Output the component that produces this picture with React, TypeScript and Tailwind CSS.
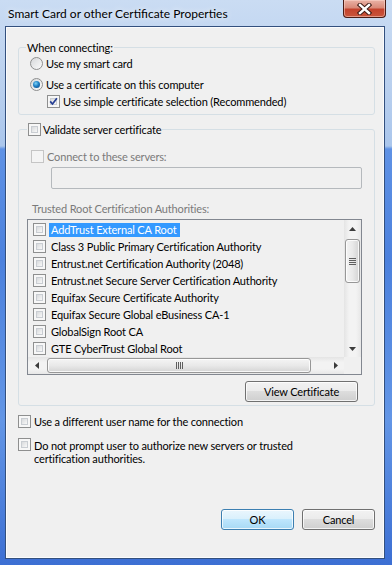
import React from 'react';

const Check: React.FC<{ checked?: boolean; disabled?: boolean }> = ({ checked = false, disabled = false }) => (
  <span
    className={`relative inline-block w-[13px] h-[13px] shrink-0 border ${
      disabled ? 'border-[#c5c5c5] bg-[#f4f4f4]' : 'border-[#8e8f8f] bg-[#f7f7f7]'
    }`}
  >
    {!disabled && (
      <span className="absolute inset-[2px] border border-[#c9cdd2] bg-[linear-gradient(135deg,#d8dadc,#f8f8f8)]" />
    )}
    {checked && (
      <svg className="absolute inset-0" width="11" height="11" viewBox="0 0 11 11">
        <path d="M2.2 5.4 L4.5 8 L8.9 2.3" fill="none" stroke="#243d94" strokeWidth="1.7" />
      </svg>
    )}
  </span>
);

const Radio: React.FC<{ checked?: boolean }> = ({ checked = false }) => (
  <span className="relative inline-block w-[13px] h-[13px] shrink-0 rounded-full border border-[#8e8f8f] bg-[linear-gradient(135deg,#d6d8da,#fbfbfb)]">
    {checked && (
      <span className="absolute left-[2px] top-[2px] w-[7px] h-[7px] rounded-full bg-[radial-gradient(circle_at_40%_35%,#7fd3f7_0%,#1f80c4_45%,#0b3f7d_100%)]" />
    )}
  </span>
);

const Button: React.FC<{ children: React.ReactNode; primary?: boolean; className?: string }> = ({ children, primary, className }) => (
  <div
    className={`h-[21px] flex items-center justify-center rounded-[3px] border shadow-[inset_0_0_0_1px_rgba(255,255,255,0.75)] ${
      primary
        ? 'border-[#3c7fb1] bg-[linear-gradient(180deg,#eaf6fd_0%,#d9f0fc_48%,#bee6fd_50%,#a7d9f5_100%)]'
        : 'border-[#707070] bg-[linear-gradient(180deg,#f2f2f2_0%,#ebebeb_48%,#dddddd_50%,#cfcfcf_100%)]'
    } ${className ?? ''}`}
  >
    {children}
  </div>
);

const Arrow: React.FC<{ dir: 'up' | 'down' | 'left' | 'right' }> = ({ dir }) => {
  const pts = {
    up: '0,4 3.5,0 7,4',
    down: '0,0 3.5,4 7,0',
    left: '4,0 0,3.5 4,7',
    right: '0,0 4,3.5 0,7',
  }[dir];
  const vertical = dir === 'up' || dir === 'down';
  return (
    <svg width={vertical ? 7 : 4} height={vertical ? 4 : 7} viewBox={vertical ? '0 0 7 4' : '0 0 4 7'}>
      <polygon points={pts} fill="#3c3c3c" />
    </svg>
  );
};

const certs = [
  'AddTrust External CA Root',
  'Class 3 Public Primary Certification Authority',
  'Entrust.net Certification Authority (2048)',
  'Entrust.net Secure Server Certification Authority',
  'Equifax Secure Certificate Authority',
  'Equifax Secure Global eBusiness CA-1',
  'GlobalSign Root CA',
  'GTE CyberTrust Global Root',
];

const App: React.FC = () => {
  return (
    <div className="w-[392px] h-[565px] flex flex-col overflow-hidden text-[11px] leading-[15px] tracking-[-0.15px] text-black [font-family:Lato,'Liberation_Sans',sans-serif] bg-[linear-gradient(180deg,#cadcf3_0px,#b8cfee_90px,#aac6ec_146px,#5f92e5_149px,#4c81dd_260px,#6396e6_420px,#3c6fd3_565px)]">
      {/* Title bar */}
      <div className="h-[26px] shrink-0 flex items-start justify-between">
        <span className="pl-[8px] pt-[6px] text-[12px] tracking-normal [text-shadow:0_0_6px_#ffffff]">Smart Card or other Certificate Properties</span>
        <div className="mr-[6px] w-[43px] h-[18px] rounded-b-[4px] border border-t-0 border-[#4a1c15] bg-[linear-gradient(180deg,#eab3a6_0%,#d98a79_45%,#c4432d_55%,#c9553c_100%)] shadow-[inset_0_0_0_1px_rgba(255,220,210,0.5)] flex items-center justify-center">
          <svg width="15" height="12" viewBox="0 0 15 12">
            <path d="M3 2 L12 10 M12 2 L3 10" stroke="#3d1a14" strokeWidth="4.4" strokeLinecap="square" />
            <path d="M3 2 L12 10 M12 2 L3 10" stroke="#ffffff" strokeWidth="2.4" strokeLinecap="square" />
          </svg>
        </div>
      </div>

      {/* Client area */}
      <div className="flex-1 flex pl-[5px] pr-[7px] pb-[6px]">
        <div className="flex-1 flex flex-col border border-[#33507e] bg-[#f0f0f0] shadow-[inset_0_0_0_1px_#fbfcfd]">
          {/* When connecting */}
          <fieldset className="mt-[13px] ml-[12px] w-[357px] border border-[#d5dfe5] rounded-[3px] pb-[5px]">
            <legend className="ml-[7px] px-[1px] leading-[15px]">When connecting:</legend>
            <div className="mt-[1px] h-[15px] pl-[11px] flex items-center gap-[3px]">
              <Radio />
              <span>Use my smart card</span>
            </div>
            <div className="mt-[6px] h-[15px] pl-[11px] flex items-center gap-[3px]">
              <Radio checked />
              <span>Use a certificate on this computer</span>
            </div>
            <div className="mt-[2px] h-[15px] pl-[28px] flex items-center gap-[3px]">
              <Check checked />
              <span>Use simple certificate selection (Recommended)</span>
            </div>
          </fieldset>

          {/* Validate server certificate */}
          <fieldset className="mt-[7px] ml-[12px] w-[357px] border border-[#d5dfe5] rounded-[3px] pb-[3px]">
            <legend className="ml-[8px] px-[1px] leading-[15px]">
              <span className="flex items-center gap-[2px]">
                <Check />
                <span>Validate server certificate</span>
              </span>
            </legend>
            <div className="mt-[12px] h-[15px] pl-[12px] flex items-center gap-[3px] text-[#7a7a7a]">
              <Check disabled />
              <span>Connect to these servers:</span>
            </div>
            <div className="mt-[3px] ml-[32px] w-[311px] h-[22px] border border-[#b5b9bd] rounded-[2px] bg-[#f0f0f0]" />
            <div className="mt-[12px] h-[15px] pl-[13px] text-[#7a7a7a]">Trusted Root Certification Authorities:</div>

            {/* List box */}
            <div className="mt-[3px] ml-[8px] w-[335px] h-[156px] border border-[#828790] bg-[#f0f0f0] grid grid-cols-[1fr_17px] grid-rows-[1fr_17px]">
              <div className="pt-[1px] overflow-hidden">
                {certs.map((c, i) => (
                  <div key={c} className="h-[17px] pl-[5px] flex items-center whitespace-nowrap">
                    <Check />
                    <span className={`ml-[3px] pl-[2px] pr-[4px] h-[14px] leading-[14px] ${i === 0 ? 'bg-[#3399ff] text-white' : ''}`}>{c}</span>
                  </div>
                ))}
              </div>
              {/* vertical scrollbar */}
              <div className="flex flex-col bg-[linear-gradient(90deg,#e4e4e4,#f3f3f3_30%,#f3f3f3_70%,#e7e7e7)]">
                <div className="h-[17px] flex items-center justify-center">
                  <Arrow dir="up" />
                </div>
                <div className="mt-[2px] mx-[1px] h-[44px] rounded-[3px] border border-[#979797] bg-[linear-gradient(90deg,#f4f4f4,#e9e9e9_50%,#d4d4d4)] shadow-[inset_0_0_0_1px_rgba(255,255,255,0.8)] flex flex-col items-center justify-center gap-[1px]">
                  <span className="w-[7px] h-px bg-[#5e5e5e]" />
                  <span className="w-[7px] h-px bg-[#5e5e5e]" />
                  <span className="w-[7px] h-px bg-[#5e5e5e]" />
                  <span className="w-[7px] h-px bg-[#5e5e5e]" />
                </div>
                <div className="flex-1" />
                <div className="h-[17px] flex items-center justify-center">
                  <Arrow dir="down" />
                </div>
              </div>
              {/* horizontal scrollbar */}
              <div className="flex bg-[linear-gradient(180deg,#e4e4e4,#f3f3f3_30%,#f3f3f3_70%,#e7e7e7)]">
                <div className="w-[17px] flex items-center justify-center">
                  <Arrow dir="left" />
                </div>
                <div className="ml-[2px] my-[1px] w-[264px] rounded-[3px] border border-[#979797] bg-[linear-gradient(180deg,#f4f4f4,#e9e9e9_50%,#d4d4d4)] shadow-[inset_0_0_0_1px_rgba(255,255,255,0.8)] flex items-center justify-center gap-[1px]">
                  <span className="w-px h-[7px] bg-[#5e5e5e]" />
                  <span className="w-px h-[7px] bg-[#5e5e5e]" />
                  <span className="w-px h-[7px] bg-[#5e5e5e]" />
                  <span className="w-px h-[7px] bg-[#5e5e5e]" />
                </div>
                <div className="flex-1" />
                <div className="w-[17px] flex items-center justify-center">
                  <Arrow dir="right" />
                </div>
              </div>
              <div className="bg-[#f0f0f0]" />
            </div>

            <Button className="mt-[6px] ml-[226px] w-[113px]">View Certificate</Button>
          </fieldset>

          <div className="mt-[8px] ml-[12px] h-[15px] flex items-center gap-[3px]">
            <Check />
            <span>Use a different user name for the connection</span>
          </div>
          <div className="mt-[9px] ml-[12px] flex items-start gap-[3px] leading-[13px]">
            <Check />
            <span className="pt-px">
              Do not prompt user to authorize new servers or trusted
              <br />
              certification authorities.
            </span>
          </div>

          <div className="mt-auto mb-[28px] pr-[9px] flex justify-end gap-[8px]">
            <Button primary className="w-[73px]">OK</Button>
            <Button className="w-[73px]">Cancel</Button>
          </div>
        </div>
      </div>
    </div>
  );
};

export default App;
